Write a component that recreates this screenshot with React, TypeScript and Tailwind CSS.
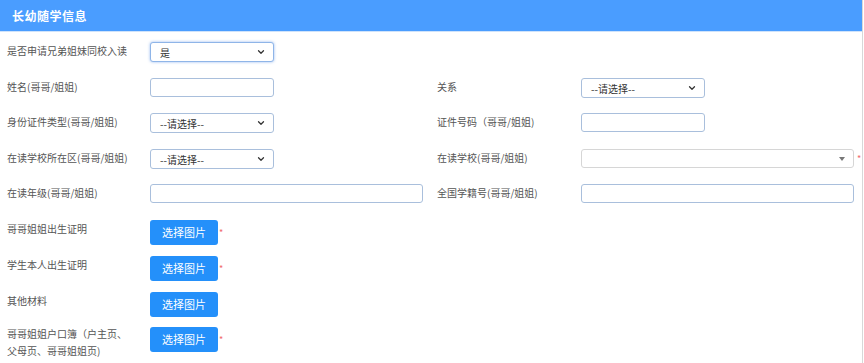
import React from 'react';
import { ChevronDown } from 'lucide-react';

const font = { fontFamily: '"Noto Sans CJK SC", "Noto Sans", sans-serif' };

const Label: React.FC<{ children: React.ReactNode; right?: boolean }> = ({ children, right }) => (
    <div className={`${right ? 'w-[144px]' : 'w-[143px]'} shrink-0 text-[10px] leading-[15px] text-[#555] pt-[1px]`}>{children}</div>
);

const Select: React.FC<{ value: string; focused?: boolean }> = ({ value, focused }) => (
    <div
        className={`w-[124px] h-[20px] bg-white border rounded-[3px] flex items-center justify-between pl-[9px] pr-[7px] text-[10px] text-[#333] ${
            focused ? 'border-[#8fb5e8] shadow-[0_0_3px_rgba(80,140,230,0.6)]' : 'border-[#a9bfdc]'
        }`}
    >
        <span>{value}</span>
        <ChevronDown className="w-[10px] h-[10px] text-[#333]" strokeWidth={3} />
    </div>
);

const Input: React.FC<{ wide?: boolean }> = ({ wide }) => (
    <div className={`${wide ? 'w-[273px]' : 'w-[124px]'} h-[19px] bg-white border border-[#a9bfdc] rounded-[3px]`} />
);

const UploadButton: React.FC<{ required?: boolean }> = ({ required }) => (
    <div className="flex items-start">
        <button className="w-[68px] h-[25px] bg-[#2490fa] text-white text-[11px] rounded-[3px] flex items-center justify-center">
            选择图片
        </button>
        {required && <span className="text-[#f06a6a] text-[9px] leading-none ml-[1px] mt-[8px]">*</span>}
    </div>
);

export default function App() {
    return (
        <div className="w-[864px] h-[363px] bg-white overflow-hidden" style={font}>
            <div className="w-[863px] h-full border-r border-[#d8d8d8]">
                <div className="h-[32px] bg-[#4a9dff] border-b border-[#cfe3fb] flex items-center pl-[12px]">
                    <h2 className="text-white text-[12px] font-bold tracking-[0.5px]">长幼随学信息</h2>
                </div>

                <div className="pl-[7px] pt-[10px] flex flex-col">
                    {/* row 1 */}
                    <div className="h-[36px] flex items-start">
                        <Label>是否申请兄弟姐妹同校入读</Label>
                        <Select value="是" focused />
                    </div>

                    {/* row 2 */}
                    <div className="h-[35px] flex items-start">
                        <div className="w-[430px] flex items-start">
                            <Label>姓名(哥哥/姐姐)</Label>
                            <Input />
                        </div>
                        <div className="flex items-start">
                            <Label right>关系</Label>
                            <Select value="--请选择--" />
                        </div>
                    </div>

                    {/* row 3 */}
                    <div className="h-[36px] flex items-start">
                        <div className="w-[430px] flex items-start">
                            <Label>身份证件类型(哥哥/姐姐)</Label>
                            <Select value="--请选择--" />
                        </div>
                        <div className="flex items-start">
                            <Label right>证件号码（哥哥/姐姐)</Label>
                            <Input />
                        </div>
                    </div>

                    {/* row 4 */}
                    <div className="h-[35px] flex items-start">
                        <div className="w-[430px] flex items-start">
                            <Label>在读学校所在区(哥哥/姐姐)</Label>
                            <Select value="--请选择--" />
                        </div>
                        <div className="flex items-start">
                            <Label right>在读学校(哥哥/姐姐)</Label>
                            <div className="w-[273px] h-[19px] bg-white border border-[#d6d6d6] rounded-[3px] flex items-center justify-end pr-[8px]">
                                <span className="w-0 h-0 border-l-[3px] border-r-[3px] border-t-[4px] border-l-transparent border-r-transparent border-t-[#777]" />
                            </div>
                            <span className="text-[#f06a6a] text-[9px] leading-none ml-[3px] mt-[5px]">*</span>
                        </div>
                    </div>

                    {/* row 5 */}
                    <div className="h-[36px] flex items-start">
                        <div className="w-[430px] flex items-start">
                            <Label>在读年级(哥哥/姐姐)</Label>
                            <Input wide />
                        </div>
                        <div className="flex items-start">
                            <Label right>全国学籍号(哥哥/姐姐)</Label>
                            <Input wide />
                        </div>
                    </div>

                    {/* uploads */}
                    <div className="h-[36px] flex items-start">
                        <Label>哥哥姐姐出生证明</Label>
                        <UploadButton required />
                    </div>
                    <div className="h-[36px] flex items-start">
                        <Label>学生本人出生证明</Label>
                        <UploadButton required />
                    </div>
                    <div className="h-[35px] flex items-start">
                        <Label>其他材料</Label>
                        <UploadButton />
                    </div>
                    <div className="h-[36px] flex items-start">
                        <div className="w-[143px] shrink-0 text-[10px] leading-[17px] text-[#555] -mt-[2px]">
                            哥哥姐姐户口簿（户主页、
                            <br />
                            父母页、哥哥姐姐页)
                        </div>
                        <UploadButton required />
                    </div>
                </div>
            </div>
        </div>
    );
}
